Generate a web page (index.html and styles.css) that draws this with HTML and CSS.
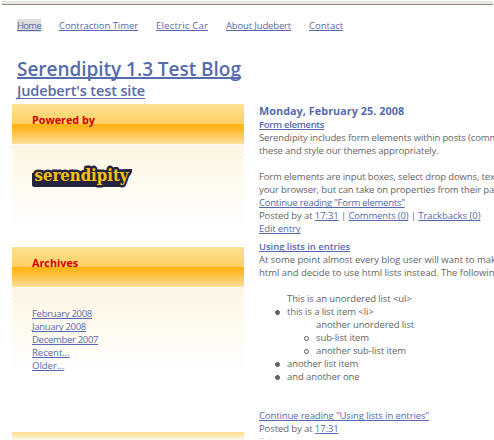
FILE: index.html
```
<!DOCTYPE html>
<html lang="en">
<head>
<meta charset="utf-8">
<title>Serendipity 1.3 Test Blog</title>
<link rel="stylesheet" href="styles.css">
</head>
<body>
<div class="chrome"></div>
<nav class="nav">
  <a class="home" href="#">Home</a>
  <a class="timer" href="#">Contraction Timer</a>
  <a class="car" href="#">Electric Car</a>
  <a class="about" href="#">About Judebert</a>
  <a href="#">Contact</a>
</nav>
<header class="banner">
  <h1><a href="#">Serendipity 1.3 Test Blog</a></h1>
  <h2><a href="#">Judebert's test site</a></h2>
</header>
<div class="columns">
  <aside class="sidebar">
    <section class="panel">
      <h3>Powered by</h3>
      <div class="panel-body">
        <svg class="logo" width="102" height="28" viewBox="0 0 102 28" role="img" aria-label="serendipity">
          <path class="logo-base" d="M1 10L1 22Q1 24 3 24H88Q91 24 93 21L101 9V6Z"/>
          <text class="logo-edge" x="3.5" y="17.5" textLength="94" lengthAdjust="spacingAndGlyphs">serendipity</text>
          <text class="logo-face" x="3.5" y="17.5" textLength="94" lengthAdjust="spacingAndGlyphs">serendipity</text>
        </svg>
      </div>
    </section>
    <section class="panel archives">
      <h3>Archives</h3>
      <div class="panel-body">
        <ul>
          <li><a href="#">February 2008</a></li>
          <li><a href="#">January 2008</a></li>
          <li><a href="#">December 2007</a></li>
          <li><a class="loose" href="#">Recent...</a></li>
          <li><a class="loose" href="#">Older...</a></li>
        </ul>
      </div>
    </section>
    <section class="panel">
      <h3></h3>
    </section>
  </aside>
  <main class="content">
    <h3 class="date">Monday, February 25. 2008</h3>
    <article class="entry">
      <h4 class="tight"><a href="#">Form elements</a></h4>
      <p class="copy">Serendipity includes form elements within posts (comm<br>these and style our themes appropriately.</p>
      <p class="copy">Form elements are input boxes, select drop downs, tex<br>your browser, but can take on properties from their pa</p>
      <div class="more"><a href="#">Continue reading "Form elements"</a></div>
      <div class="meta">Posted by at <a href="#">17:31</a> | <a class="comments" href="#">Comments (0)</a> | <a class="trackbacks" href="#">Trackbacks (0)</a></div>
      <div class="meta"><a href="#">Edit entry</a></div>
    </article>
    <article class="entry">
      <h4><a href="#">Using lists in entries</a></h4>
      <p class="copy dense">At some point almost every blog user will want to mak<br>html and decide to use html lists instead. The following</p>
      <ul class="list">
        <li class="plain">This is an unordered list &lt;ul&gt;</li>
        <li>this is a list item &lt;li&gt;
          <ul class="sublist">
            <li class="plain">another unordered list</li>
            <li>sub-list item</li>
            <li>another sub-list item</li>
          </ul>
        </li>
        <li>another list item</li>
        <li>and another one</li>
      </ul>
      <div class="more second"><a href="#">Continue reading "Using lists in entries"</a></div>
      <div class="meta">Posted by at <a href="#">17:31</a></div>
      <div class="meta"><a href="#">Edit entry</a></div>
    </article>
  </main>
</div>
<div class="fade"></div>
</body>
</html>
```
FILE: styles.css
```
*, *::before { box-sizing: border-box; }
body {
  position: relative;
  width: 494px;
  height: 440px;
  margin: 0;
  overflow: hidden;
  background: #fff;
  color: #666;
  font: 9.5px/13px "Open Sans", "Liberation Sans", sans-serif;
}
h1, h2, h3, h4, p, ul { margin: 0; padding: 0; }
a {
  color: #566bad;
  text-decoration: underline;
  text-decoration-thickness: 1px;
  text-underline-offset: 1px;
  text-decoration-skip-ink: none;
}

.chrome {
  height: 5px;
  margin: 0 1px 0 2px;
  background: linear-gradient(#fff 0 1px, #deded9 1px 2px, #f0f0ed 2px 3px, #e0dfda 3px 4px, #918b83 4px 5px);
}
.nav { display: flex; padding: 14px 0 0 17px; }
.nav a { margin-right: 18px; white-space: nowrap; }
.nav .home { width: 24px; background: #ddd; letter-spacing: -0.7px; }
.nav .timer { width: 79px; letter-spacing: -0.06px; }
.nav .car { width: 52px; letter-spacing: 0.22px; }
.nav .about { width: 65px; letter-spacing: -0.15px; }

.banner { height: 72px; padding: 25px 0 0 17px; }
.banner h1 { font-size: 19px; line-height: 25px; font-weight: 600; letter-spacing: -0.03px; }
.banner h1 a { text-decoration-thickness: 2px; }
.banner h2 { font-size: 14.5px; line-height: 17px; font-weight: 600; letter-spacing: -0.12px; }
.banner h2 a { text-underline-offset: 2px; }

.columns { display: flex; gap: 15px; height: 336px; padding-left: 12px; overflow: hidden; }
.sidebar { flex: 0 0 232px; }
.panel { height: 143px; }
.panel.archives { height: 185px; }
.panel h3 {
  height: 40px;
  padding: 8px 20px;
  color: #d40000;
  font-size: 10.8px;
  line-height: 16px;
  font-weight: 700;
  background: linear-gradient(#ffe196, #ffd060 20px, #ffb310 20px, #ffb92a 25px, #ffdf9c 40px);
}
.panel-body {
  height: 90px;
  margin-top: 1px;
  padding: 18px 19px;
  background:
    linear-gradient(rgba(255, 255, 255, 0), #fff 86px),
    repeating-linear-gradient(135deg, #fff0d2 0 1.414px, #fffcf5 1.414px 2.828px);
}
.panel-body ul { padding: 1px 1px; list-style: none; letter-spacing: -0.3px; }
.panel-body .loose { letter-spacing: 0; }
.logo { display: block; overflow: visible; }
.logo-base { fill: #24243f; }
.logo text { font: bold 17.5px "DejaVu Serif", serif; letter-spacing: 0; }
.logo-edge { fill: #24243f; stroke: #24243f; stroke-width: 5px; stroke-linejoin: round; }
.logo-face { fill: #fcc20b; }

.content { flex: 1; min-width: 0; overflow: hidden; white-space: nowrap; letter-spacing: -0.1px; }
.date { color: #566bad; font-size: 10.8px; line-height: 14px; font-weight: 700; letter-spacing: 0.06px; }
.entry { height: 122px; }
.entry h4 { font-size: 9.5px; font-weight: 600; letter-spacing: -0.05px; }
.entry h4.tight { letter-spacing: -0.3px; }
.copy { margin-bottom: 13px; letter-spacing: -0.13px; }
.copy + .copy { margin-bottom: 0; }
.copy.dense { letter-spacing: -0.04px; }
.more { letter-spacing: -0.23px; }
.more.second { padding-top: 26px; letter-spacing: -0.12px; }
.comments { letter-spacing: -0.16px; }
.trackbacks { letter-spacing: -0.03px; }

.list, .sublist { list-style: none; }
.list { padding-left: 28px; }
.sublist { padding-left: 29px; }
.list li { position: relative; }
.list li:not(.plain)::before {
  content: "";
  position: absolute;
  left: -12px;
  top: 5px;
  width: 5px;
  height: 5px;
  border: 1px solid #555;
  border-radius: 50%;
  background: #666;
}
.list .sublist li:not(.plain)::before { background: #fff; }

.fade {
  position: absolute;
  inset: auto 0 0 0;
  height: 7px;
  background: linear-gradient(rgba(255, 255, 255, 0), rgba(255, 255, 255, 0.9));
}
```
